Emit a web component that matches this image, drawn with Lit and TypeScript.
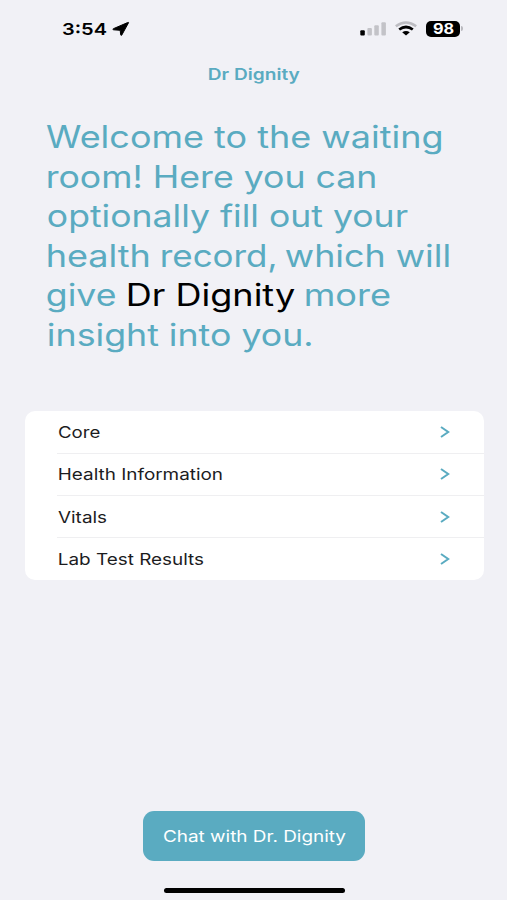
import { LitElement, html, css, svg } from "lit";
import { customElement, property } from "lit/decorators.js";
import { styleMap } from "lit/directives/style-map.js";

const FAMILY = 'Inter, "Liberation Sans", sans-serif';
const pen = document.createElement("canvas").getContext("2d")!;

/** One line of text, widened so that its ink spans exactly `width` pixels. */
@customElement("wide-text")
class WideText extends LitElement {
  @property() text = "";
  @property({ type: Number }) width = 100;
  @property({ type: Number }) size = 16;
  @property({ type: Number }) weight = 400;

  static styles = css`
    :host { display: block; text-align: left; }
    .line {
      display: inline-block;
      vertical-align: top;
      white-space: pre;
      transform-origin: 0 50%;
      font-family: Inter, "Liberation Sans", sans-serif;
    }
    .box { white-space: nowrap; }
  `;

  render() {
    pen.font = `${this.weight} ${this.size}px ${FAMILY}`;
    const m = pen.measureText(this.text);
    const k = this.width / (m.actualBoundingBoxLeft + m.actualBoundingBoxRight);
    return html`<div class="box" style=${styleMap({ width: this.width + "px" })}><span class="line" style=${styleMap({
      fontSize: this.size + "px",
      fontWeight: String(this.weight),
      transform: `translateX(${(m.actualBoundingBoxLeft * k).toFixed(2)}px) scaleX(${k.toFixed(4)})`,
    })}>${this.text}</span></div>`;
  }
}

interface Part { text: string; width: number; gap?: number; dark?: boolean }

const WELCOME: Part[][] = [
  [{ text: "Welcome to the waiting", width: 395.5, gap: -0.7 }],
  [{ text: "room! Here you can", width: 327, gap: 1.3 }],
  [{ text: "optionally fill out your", width: 359.5, gap: 0.5 }],
  [
    { text: "health", width: 100.5, gap: 1.2 },
    { text: "record,", width: 113.5, gap: 13.3 },
    { text: "which will", width: 163.5, gap: 10.5 },
  ],
  [
    { text: "give", width: 68.5, gap: 0.4 },
    { text: "Dr Dignity", width: 167, gap: 12, dark: true },
    { text: "more", width: 84, gap: 11.5 },
  ],
  [
    { text: "insight", width: 111, gap: 1.2 },
    { text: "into you.", width: 141.5, gap: 11.3 },
  ],
];

const SECTIONS = [
  { text: "Core", width: 42, gap: 0 },
  { text: "Health Information", width: 163.5, gap: 0.8 },
  { text: "Vitals", width: 48.5, gap: 0 },
  { text: "Lab Test Results", width: 144.5, gap: 0.8 },
];

@customElement("app-root")
class AppRoot extends LitElement {
  static styles = css`
    :host {
      display: flex;
      flex-direction: column;
      box-sizing: border-box;
      width: 507px;
      height: 900px;
      overflow: hidden;
      background: #f1f1f6;
      color: #000;
    }
    .status {
      display: flex;
      justify-content: space-between;
      height: 58px;
      padding: 0 44px 0 61.5px;
      box-sizing: border-box;
    }
    .clock { display: flex; line-height: 58px; }
    .clock svg { margin: 22px 0 0 5px; overflow: visible; }
    .radios { display: flex; padding-top: 20px; }
    .wifi { margin-left: 8px; }
    .battery { display: flex; margin-left: 9px; }
    .level {
      width: 34px;
      height: 16px;
      margin-top: 1px;
      border-radius: 5px;
      background: #000;
      color: #fff;
      line-height: 16px;
      display: flex;
      justify-content: center;
    }
    .cap { width: 2px; height: 5px; margin: 6px 0 0 1px; border-radius: 0 2px 2px 0; background: #b9b9be; }
    .title { height: 33px; margin-left: 208.5px; line-height: 33px; color: #5aabc1; }
    .welcome { margin: 26px 0 0 47px; color: #5aabc1; }
    .row { display: flex; height: 39.6px; line-height: 39.6px; }
    .dark { color: #000; }
    .card {
      margin: 56.6px 23.5px 0 24.5px;
      height: 169px;
      border-radius: 10px;
      background: #fff;
      color: #1c1c1e;
    }
    .item {
      display: flex;
      justify-content: space-between;
      align-items: center;
      box-sizing: border-box;
      height: 42.4px;
      margin-left: 32.5px;
      padding: 0 33.5px 0 1px;
      line-height: 42px;
      border-bottom: 1.5px solid #efeff1;
    }
    .item:last-child { border-bottom-color: transparent; }
    .chat {
      display: flex;
      justify-content: center;
      width: 222px;
      height: 50px;
      margin: auto auto 27px 143px;
      padding: 0;
      border: 0;
      border-radius: 11px;
      background: #5aabc1;
      color: #fff;
      line-height: 50px;
    }
    .home { width: 181px; height: 4.5px; margin: 0 0 7.5px 163.5px; border-radius: 3px; background: #000; }
  `;

  render() {
    return html`
      <header class="status">
        <div class="clock">
          <wide-text text="3:54" width="45" size="16.5" weight="600"></wide-text>
          <svg width="18" height="15" viewBox="0 0 18 15">
            <path d="M16.5 0.8 L9.8 13 Q9 14 8.7 12.8 L8.2 8.3 L1.6 7.8 Q0.2 7.4 1.4 6.7 L15.6 0.6 Q17 0.1 16.5 0.8Z" stroke="#000" stroke-width="1" stroke-linejoin="round" />
          </svg>
        </div>
        <div class="radios">
          <svg width="27" height="18" viewBox="0 0 27 18">
            <rect x="0.3" y="10.2" width="4.5" height="5.3" rx="1" />
            ${[[7.4, 8], [14.3, 5.3], [21.4, 2.2]].map(([x, y]) => svg`<rect x=${x} y=${y} width="4.5" height=${15.5 - y} rx="1" fill="#c3c3c8" />`)}
          </svg>
          <svg class="wifi" width="22" height="18" viewBox="0 0 22 18">
            <path d="M0.8 6.3 Q11 -1.4 21.2 6.3" fill="none" stroke="#bdbdc2" stroke-width="2.5" />
            <path d="M4.2 9.5 Q11 4.4 17.8 9.5" fill="none" stroke="#000" stroke-width="2.8" />
            <path d="M7.2 12.2 Q11 9.6 14.8 12.2 L11 15.4Z" />
          </svg>
          <div class="battery">
            <div class="level"><wide-text text="98" width="21" size="14" weight="700"></wide-text></div>
            <div class="cap"></div>
          </div>
        </div>
      </header>
      <div class="title"><wide-text text="Dr Dignity" width="91.5" size="16" weight="600"></wide-text></div>
      <div class="welcome">
        ${WELCOME.map((line) => html`<div class="row">${line.map((p) => html`<wide-text
          class=${p.dark ? "dark" : ""}
          style=${styleMap({ marginLeft: (p.gap ?? 0) + "px" })}
          .text=${p.text} .width=${p.width} .size=${30.5}></wide-text>`)}</div>`)}
      </div>
      <div class="card">
        ${SECTIONS.map((s) => html`<div class="item">
          <wide-text style=${styleMap({ marginLeft: s.gap + "px" })} .text=${s.text} .width=${s.width} .size=${16}></wide-text>
          <svg width="10" height="12" viewBox="0 0 10 12">
            <path d="M1 1 L8.2 6 L1 11" fill="none" stroke="#5aabc1" stroke-width="2" />
          </svg>
        </div>`)}
      </div>
      <button class="chat"><wide-text text="Chat with Dr. Dignity" width="183" size="16"></wide-text></button>
      <div class="home"></div>
    `;
  }
}
